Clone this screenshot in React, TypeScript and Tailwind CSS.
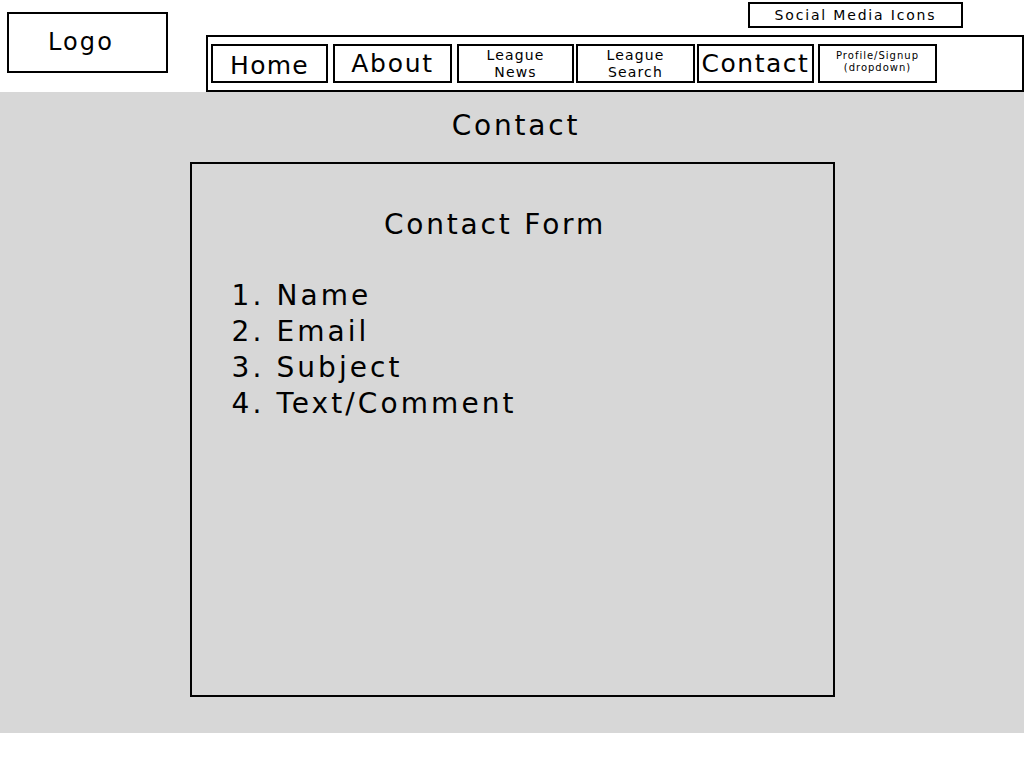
import React from 'react';

const navItems = [
    { label: 'Home', w: 'w-[117px]', ml: 'ml-[1px]', text: 'text-[25px] tracking-[0.05em] pt-[4px]' },
    { label: 'About', w: 'w-[119px]', ml: 'ml-[5px]', text: 'text-[25px] tracking-[0.07em]' },
    { label: 'League News', w: 'w-[117px]', ml: 'ml-[5px]', text: 'text-[14px] leading-[17px] tracking-[0.08em] px-6' },
    { label: 'League Search', w: 'w-[119px]', ml: 'ml-[2px]', text: 'text-[14px] leading-[17px] tracking-[0.08em] px-6' },
    { label: 'Contact', w: 'w-[117px]', ml: 'ml-[2px]', text: 'text-[25px] tracking-[0.06em]' },
    { label: 'Profile/Signup (dropdown)', w: 'w-[119px]', ml: 'ml-[4px]', text: 'text-[10px] leading-[12px] tracking-[0.1em] px-3 pb-1' },
];

const fields = ['Name', 'Email', 'Subject', 'Text/Comment'];

const App = () => {
    return (
        <div className="w-[1024px] h-[768px] bg-white text-black font-['DejaVu_Sans',sans-serif]">
            {/* header */}
            <div className="h-[92px] flex">
                <div className="ml-[7px] mt-[12px] w-[161px] h-[61px] border-2 border-black flex items-center justify-center text-[24px] tracking-[0.09em] pb-[2px] pr-[13px]">
                    Logo
                </div>
                <div className="ml-[38px] flex flex-col">
                    <div className="ml-[542px] mt-[2px] w-[215px] h-[26px] border-2 border-black flex items-center justify-center text-[14px] tracking-[0.13em]">
                        Social Media Icons
                    </div>
                    <div className="mt-[7px] w-[818px] h-[57px] border-2 border-black flex items-start pt-[7px] pl-[2px]">
                        {navItems.map(item => (
                            <div key={item.label} className={`${item.w} ${item.ml} h-[39px] border-2 border-black flex items-center justify-center text-center ${item.text}`}>
                                {item.label}
                            </div>
                        ))}
                    </div>
                </div>
            </div>

            {/* main */}
            <div className="h-[641px] bg-[#d7d7d7] flex flex-col items-center">
                <h1 className="mt-[16px] ml-[8px] text-[28px] leading-[36px] tracking-[0.1em]">Contact</h1>
                <div className="mt-[18px] w-[645px] h-[535px] border-2 border-black">
                    <h2 className="mt-[43px] pr-[34px] text-center text-[28px] leading-[36px] tracking-[0.1em]">Contact Form</h2>
                    <ol className="mt-[35px] ml-[40px] text-[28px] leading-[36px] tracking-[0.11em]">
                        {fields.map((f, i) => (
                            <li key={f}>{i + 1}. {f}</li>
                        ))}
                    </ol>
                </div>
            </div>
        </div>
    );
};

export default App;
